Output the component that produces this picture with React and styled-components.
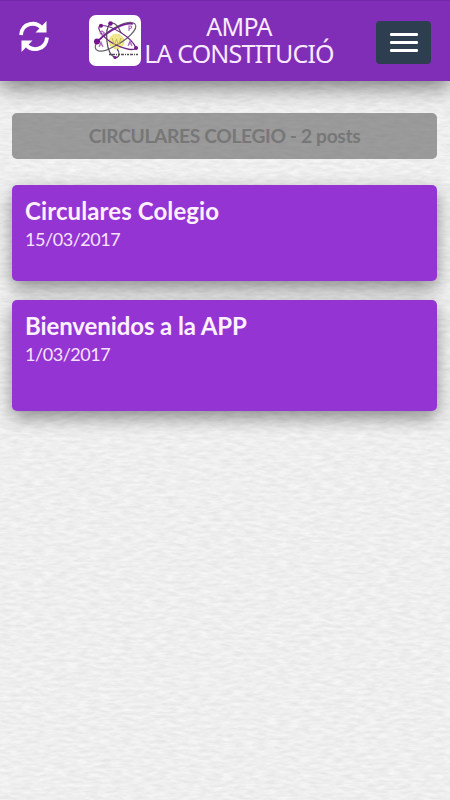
import React from "react";
import styled, { createGlobalStyle } from "styled-components";

const paper = encodeURIComponent(
  `<svg xmlns="http://www.w3.org/2000/svg" width="450" height="800"><filter id="p" x="0" y="0" width="100%" height="100%" color-interpolation-filters="sRGB"><feTurbulence type="fractalNoise" baseFrequency="0.09 0.32" numOctaves="3" seed="7"/><feColorMatrix values="0.1 0 0 0 0.885  0.1 0 0 0 0.885  0.1 0 0 0 0.885  0 0 0 0 1"/></filter><rect width="450" height="800" filter="url(#p)"/></svg>`
);

const GlobalStyle = createGlobalStyle`
  * { box-sizing: border-box; }
  body { margin: 0; background: #f0f0f0; }
  button { border: 0; padding: 0; cursor: pointer; }
`;

const Screen = styled.div`
  width: 450px;
  height: 800px;
  overflow: hidden;
  display: flex;
  flex-direction: column;
  background: #f0f0f0 url("data:image/svg+xml,${paper}");
  font-family: Lato, sans-serif;
`;

const Header = styled.header`
  height: 81px;
  flex: none;
  display: flex;
  align-items: flex-start;
  background: #802eb7;
  border-top: 1px solid #7427aa;
  box-shadow: 0 5px 22px rgba(0, 0, 0, 0.55);
`;

const RefreshButton = styled.button`
  width: 32px;
  height: 32px;
  margin: 20px 0 0 18px;
  background: none;
  svg { display: block; }
`;

const Logo = styled.div`
  width: 52px;
  height: 51px;
  margin: 14px 0 0 39px;
  border-radius: 7px;
  background: #fff;
  overflow: hidden;
  flex: none;
  svg { display: block; }
`;

const Title = styled.h1`
  width: 196px;
  margin: 12px 0 0 0;
  display: flex;
  flex-direction: column;
  align-items: center;
  font: 400 25px/27px "Noto Sans", sans-serif;
  color: #f9eaff;
  white-space: nowrap;
`;

const TitleLine = styled.span`
  letter-spacing: ${(p) => p.$spacing}px;
`;

const MenuButton = styled.button`
  width: 55px;
  height: 43px;
  margin: 20px 19px 0 auto;
  border-radius: 4px;
  background: #2c3e50;
  display: flex;
  flex-direction: column;
  align-items: center;
  justify-content: center;
  gap: 5px;
`;

const MenuBar = styled.span`
  width: 28px;
  height: 2.7px;
  border-radius: 1px;
  background: #fff;
`;

const Content = styled.main`
  padding: 32px 13px 0 12px;
  display: flex;
  flex-direction: column;
`;

const Banner = styled.div`
  height: 46px;
  margin-bottom: 26px;
  border-radius: 5px;
  background: rgba(96, 96, 96, 0.6);
  color: #777;
  font-size: 19.2px;
  font-weight: 700;
  letter-spacing: -0.34px;
  line-height: 46px;
  text-align: center;
  white-space: nowrap;
`;

const PostCard = styled.article`
  height: ${(p) => p.$height}px;
  margin-bottom: 19px;
  padding: 11px 13px;
  border-radius: 5px;
  background: #9435d3;
  color: #fdf0ff;
  box-shadow: 0 7px 18px rgba(0, 0, 0, 0.42);
`;

const PostTitle = styled.h2`
  margin: 0;
  font-size: 24px;
  line-height: 29px;
  font-weight: 700;
  letter-spacing: ${(p) => p.$spacing}px;
`;

const PostDate = styled.time`
  display: block;
  font-size: 18px;
  line-height: 29px;
  letter-spacing: -0.45px;
  color: #f7e3ff;
`;

const posts = [
  { title: "Circulares Colegio", date: "15/03/2017", height: 96, spacing: 0.1 },
  { title: "Bienvenidos a la APP", date: "1/03/2017", height: 111, spacing: -0.1 },
];

function RefreshIcon() {
  return (
    <svg width="32" height="32" viewBox="0 0 32 32">
      <g fill="none" stroke="#fff" strokeWidth="3.800">
        <path d="M3 14C4 1.500 18-.5 24.500 8" />
        <path d="M29 16.500C28 29 14 31.500 7.500 23" />
      </g>
      <path d="M28.500 0v11.500H17.500z" fill="#fff" />
      <path d="M3.500 31V19.500h11z" fill="#fff" />
    </svg>
  );
}

function AtomLogo() {
  return (
    <svg width="52" height="51" viewBox="0 0 52 51">
      <circle cx="27.500" cy="26.500" r="7.300" fill="#f0e88f" stroke="#e2d74d" strokeDasharray="2 1" />
      <g fill="none" strokeWidth="1.200">
        <path d="M8 27C2 37 12 39 24 32C38 25 50 14 46 9C41 4 21 12 8 27" stroke="#6d6370" />
        <path d="M8 27C20 15 36 7 44 9" stroke="#751e91" strokeWidth="1.700" />
        <path d="M47 33C43 23 23 10 12 10.500C5 12 16 25 27 30C36 34 45 36 47 33" stroke="#702587" />
        <path d="M21.500 8C15 14 17 39 26 42.500C31 43 31 37 28 34M21.500 8C26 7 30 12 32 18" stroke="#59465e" />
      </g>
      <g fill="#711591">
        <circle cx="21.500" cy="8.500" r="2.300" />
        <circle cx="12" cy="10.800" r="2" />
        <circle cx="8" cy="26.500" r="3" />
        <circle cx="47" cy="33" r="2" />
        <circle cx="26" cy="42.500" r="1.600" />
      </g>
      <g fill="none" stroke="#a568b8" strokeWidth="1.100">
        <path d="m13 16 2.500 2-2.500 2-2-2zM10 32l2-5 2 5m-3-2h2M40 16v-5h2q2 2-2 3M39 31l2-5 2 5m-3-2h2" />
      </g>
      <path d="m23 23 2.500 7 2-6 2 6 2.500-7" fill="none" stroke="#c5ba4d" />
      <path d="M20 39.500h30" stroke="#555058" strokeWidth="1.500" strokeDasharray="2 1 3 1 1 1" />
    </svg>
  );
}

export default function App() {
  return (
    <>
      <GlobalStyle />
      <Screen>
        <Header>
          <RefreshButton aria-label="Actualizar"><RefreshIcon /></RefreshButton>
          <Logo><AtomLogo /></Logo>
          <Title>
            <TitleLine $spacing={-0.7}>AMPA</TitleLine>
            <TitleLine $spacing={-0.85}>LA CONSTITUCIÓ</TitleLine>
          </Title>
          <MenuButton aria-label="Menú"><MenuBar /><MenuBar /><MenuBar /></MenuButton>
        </Header>
        <Content>
          <Banner>CIRCULARES COLEGIO - 2 posts</Banner>
          {posts.map((post) => (
            <PostCard key={post.title} $height={post.height}>
              <PostTitle $spacing={post.spacing}>{post.title}</PostTitle>
              <PostDate>{post.date}</PostDate>
            </PostCard>
          ))}
        </Content>
      </Screen>
    </>
  );
}
